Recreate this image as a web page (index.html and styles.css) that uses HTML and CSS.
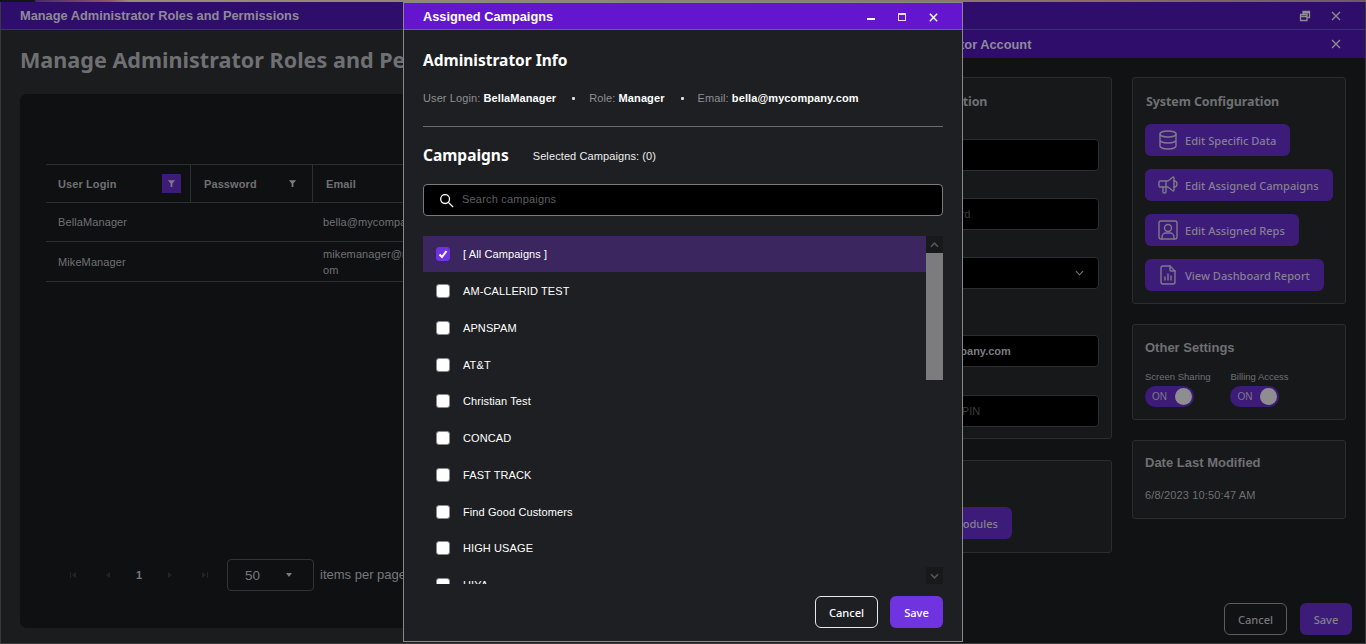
FILE: index.html
```html
<!DOCTYPE html>
<html>
<head>
  <title>Manage Administrator Roles and Permissions</title>
  <link rel="stylesheet" href="styles.css">
</head>
<body>
  <div class="top-strip"></div>

  <!-- main window -->
  <div class="window main-window">
    <div class="titlebar main-title">
      <span>Manage Administrator Roles and Permissions</span>
      <div class="win-actions">
        <svg class="win-icon" viewBox="0 0 12 12"><path d="M1.5 4.500h6.500v6h-6.500zM1.500 6.500h6.500M4 4.500v-3h6.500v6h-2.500M4 2.800h6.500"/></svg>
        <svg class="win-icon" viewBox="0 0 12 12"><path d="M2 2l8 8M10 2l-8 8"/></svg>
      </div>
    </div>
    <div class="main-body">
      <h1 class="page-title">Manage Administrator Roles and Permissions</h1>
      <div class="grid-card">
        <div class="grid">
          <div class="grid-head">
            <div class="head-cell col-login">User Login <span class="filter filter-on"><svg viewBox="0 0 10 10"><path d="M1 1.500h8L6 5v4H4V5z"/></svg></span></div>
            <div class="head-cell col-pass">Password <span class="filter"><svg viewBox="0 0 10 10"><path d="M1 1.500h8L6 5v4H4V5z"/></svg></span></div>
            <div class="head-cell col-mail">Email</div>
          </div>
          <div class="grid-row row-one">
            <div class="col-login">BellaManager</div>
            <div class="col-pass"></div>
            <div class="col-mail">bella@mycompany.com</div>
          </div>
          <div class="grid-row row-two">
            <div class="col-login">MikeManager</div>
            <div class="col-pass"></div>
            <div class="col-mail">mikemanager@mycompany.c<br>om</div>
          </div>
        </div>
        <div class="pager">
          <div class="pager-nums">
            <svg class="pg" viewBox="0 0 8 8"><path d="M1 1h1v6H1zM7 1v6L3 4z"/></svg>
            <svg class="pg" viewBox="0 0 8 8"><path d="M6 1v6L2 4z"/></svg>
            <span class="pg-num">1</span>
            <svg class="pg" viewBox="0 0 8 8"><path d="M2 1v6l4-3z"/></svg>
            <svg class="pg" viewBox="0 0 8 8"><path d="M1 1v6l4-3zM6 1h1v6H6z"/></svg>
          </div>
          <div class="pg-size"><span>50</span><i class="caret"></i></div>
          <span class="pg-label">items per page</span>
        </div>
      </div>
    </div>
  </div>

  <!-- edit account window -->
  <div class="window edit-window">
    <div class="titlebar edit-title">
      <span>Edit Administrator Account</span>
      <svg class="win-icon" viewBox="0 0 12 12"><path d="M2 2l8 8M10 2l-8 8"/></svg>
    </div>
    <div class="edit-body">
      <div class="edit-col left-col">
        <div class="panel info-panel">
          <h3>Account Information</h3>
          <div class="input first-input"></div>
          <div class="input dim">Type a Password</div>
          <div class="input select"><svg viewBox="0 0 10 6"><path d="M1 1l4 4 4-4"/></svg></div>
          <div class="input mail">bella@mycompany.com</div>
          <div class="input dim">Enter Manager PIN</div>
        </div>
        <div class="panel modules-panel">
          <button class="btn-purple">Edit Assigned Modules</button>
        </div>
      </div>
      <div class="edit-col right-col">
        <div class="panel config-panel">
          <h3>System Configuration</h3>
          <button class="btn-purple">
            <svg viewBox="0 0 24 24"><ellipse cx="12" cy="6" rx="8" ry="3"/><path d="M4 6v6c0 1.700 3.600 3 8 3s8-1.300 8-3V6M4 12v6c0 1.700 3.600 3 8 3s8-1.300 8-3v-6"/></svg>
            Edit Specific Data
          </button>
          <button class="btn-purple">
            <svg viewBox="0 0 24 24"><path d="M18 8a3 3 0 0 1 0 6M10 8v11a1 1 0 0 1-1 1H8a1 1 0 0 1-1-1v-5"/><path d="M12 8l4.700-3.800A.8.800 0 0 1 18 4.800v12.400a.8.800 0 0 1-1.300.6L12 14H4a1 1 0 0 1-1-1V9a1 1 0 0 1 1-1z"/></svg>
            Edit Assigned Campaigns
          </button>
          <button class="btn-purple">
            <svg viewBox="0 0 24 24"><rect x="3" y="3" width="18" height="18" rx="2"/><circle cx="12" cy="10" r="3.500"/><path d="M6 21v-2a4 4 0 0 1 4-4h4a4 4 0 0 1 4 4v2"/></svg>
            Edit Assigned Reps
          </button>
          <button class="btn-purple">
            <svg viewBox="0 0 24 24"><path d="M14 3v4a1 1 0 0 0 1 1h4"/><path d="M17 21H7a2 2 0 0 1-2-2V5a2 2 0 0 1 2-2h7l5 5v11a2 2 0 0 1-2 2zM9 17v-3M12 17v-6M15 17v-4"/></svg>
            View Dashboard Report
          </button>
        </div>
        <div class="panel settings-panel">
          <h3 class="arial">Other Settings</h3>
          <div class="toggles">
            <div class="toggle-item">
              <label>Screen Sharing</label>
              <div class="toggle"><span>ON</span><i></i></div>
            </div>
            <div class="toggle-item">
              <label>Billing Access</label>
              <div class="toggle"><span>ON</span><i></i></div>
            </div>
          </div>
        </div>
        <div class="panel date-panel">
          <h3 class="arial">Date Last Modified</h3>
          <p>6/8/2023 10:50:47 AM</p>
        </div>
      </div>
    </div>
    <div class="edit-foot">
      <button class="btn-cancel">Cancel</button>
      <button class="btn-save">Save</button>
    </div>
  </div>

  <!-- assigned campaigns dialog -->
  <div class="window dialog">
    <div class="titlebar dialog-title">
      <span>Assigned Campaigns</span>
      <div class="dialog-actions">
        <i class="act-min"></i>
        <i class="act-max"></i>
        <svg viewBox="0 0 12 12"><path d="M2 2l8 8M10 2l-8 8"/></svg>
      </div>
    </div>
    <div class="dialog-body">
      <h2>Administrator Info</h2>
      <div class="info-line">
        <span>User Login: <b>BellaManager</b></span>
        <em></em>
        <span>Role: <b>Manager</b></span>
        <em></em>
        <span>Email: <b>bella@mycompany.com</b></span>
      </div>
      <hr>
      <div class="camp-head">
        <h2>Campaigns</h2>
        <span>Selected Campaigns: (0)</span>
      </div>
      <div class="search">
        <svg viewBox="0 0 16 16"><circle cx="6.500" cy="6.500" r="4.700"/><path d="M10 10l5 5"/></svg>
        <span>Search campaigns</span>
      </div>
      <div class="camp-list">
        <div class="camp-rows">
          <div class="camp-row selected"><i class="check checked"><svg viewBox="0 0 12 12"><path d="M2.500 6.500l2.500 2.500 4.500-6"/></svg></i>[ All Campaigns ]</div>
          <div class="camp-row"><i class="check"></i>AM-CALLERID TEST</div>
          <div class="camp-row"><i class="check"></i>APNSPAM</div>
          <div class="camp-row"><i class="check"></i>AT&amp;T</div>
          <div class="camp-row"><i class="check"></i>Christian Test</div>
          <div class="camp-row"><i class="check"></i>CONCAD</div>
          <div class="camp-row"><i class="check"></i>FAST TRACK</div>
          <div class="camp-row"><i class="check"></i>Find Good Customers</div>
          <div class="camp-row"><i class="check"></i>HIGH USAGE</div>
          <div class="camp-row"><i class="check"></i>HIYA</div>
        </div>
        <div class="scrollbar">
          <div class="sb-btn"><svg viewBox="0 0 10 6"><path d="M1 5l4-4 4 4"/></svg></div>
          <div class="sb-thumb"></div>
          <div class="sb-space"></div>
          <div class="sb-btn"><svg viewBox="0 0 10 6"><path d="M1 1l4 4 4-4"/></svg></div>
        </div>
      </div>
      <div class="dialog-foot">
        <button class="dlg-cancel">Cancel</button>
        <button class="dlg-save">Save</button>
      </div>
    </div>
  </div>
</body>
</html>
```

FILE: styles.css
```css
* {
  box-sizing: border-box;
}

html, body {
  height: 100%;
}

body {
  margin: 0;
  overflow: hidden;
  background: #1b1c1e;
  font-family: "Liberation Sans", Arial, sans-serif;
  position: relative;
}

h1, h2, h3, p {
  margin: 0;
}

.top-strip {
  height: 2px;
  background: linear-gradient(90deg, #141416 0, #141416 34px, #4a2a70 36px, #8a5a60 110px, #9a8a78 130px, #8d7f70 60%, #8a6d64 80%, #6d5a66 100%);
}

.window {
  position: absolute;
}

.titlebar {
  display: flex;
  align-items: center;
  justify-content: space-between;
}

.win-icon {
  width: 12px;
  height: 12px;
  fill: none;
  stroke: #8f8f93;
  stroke-width: 1.3;
}

/* main window */
.main-window {
  left: 0;
  top: 2px;
  right: 0;
  bottom: 0;
  border: 1px solid #3a3a3d;
  border-top: 0;
  display: flex;
  flex-direction: column;
}

.main-title {
  height: 28px;
  flex: none;
  padding: 0 23px 0 19px;
  background: #2e0e6a;
  border-bottom: 1px solid #3d3a48;
  color: #8f8a9a;
  font-size: 12.8px;
  font-weight: bold;
}

.win-actions {
  display: flex;
  gap: 19px;
}

.main-body {
  flex: 1;
  padding: 17px 19px 15px 19px;
  display: flex;
  flex-direction: column;
  min-height: 0;
}

.page-title {
  font-family: "Noto Sans", sans-serif;
  font-size: 21.6px;
  line-height: 26px;
  font-weight: 700;
  color: #6f7073;
  white-space: nowrap;
  margin-bottom: 21px;
}

.grid-card {
  flex: 1;
  background: #0f1012;
  border-radius: 7px;
  padding: 70px 0 0 26px;
  display: flex;
  flex-direction: column;
}

.grid {
  flex: 1;
  color: #6f7073;
  font-size: 11px;
  letter-spacing: 0.1px;
}

.grid-head, .grid-row {
  display: flex;
  align-items: center;
  border-bottom: 1px solid #2e2f32;
}

.grid-head {
  height: 39px;
  border-top: 1px solid #2e2f32;
  align-items: stretch;
  font-weight: bold;
}

.head-cell {
  display: flex;
  align-items: center;
  justify-content: space-between;
  border-right: 1px solid #2e2f32;
}

.col-login {
  width: 145px;
  padding: 0 9px 0 12px;
  flex: none;
}

.col-pass {
  width: 122px;
  padding: 0 10px 0 13px;
  flex: none;
}

.col-mail {
  width: 420px;
  padding-left: 10px;
  flex: none;
  line-height: 16px;
}

.head-cell.col-mail {
  justify-content: flex-start;
  padding-left: 13px;
  border-right: 0;
}

.row-one {
  height: 39px;
}

.row-two {
  height: 40px;
}

.filter {
  width: 19px;
  height: 19px;
  display: flex;
  align-items: center;
  justify-content: center;
}

.filter svg {
  width: 9px;
  height: 9px;
  fill: #7c7c80;
}

.filter-on {
  background: #3d1b78;
}

.pager {
  height: 34px;
  display: flex;
  align-items: center;
  margin-bottom: 36px;
  color: #77787b;
}

.pager-nums {
  display: flex;
  align-items: center;
  gap: 27px;
  padding-left: 23px;
  width: 181px;
}

.pg {
  width: 8px;
  height: 8px;
  fill: #232426;
  flex: none;
}

.pg-num {
  font-size: 11px;
  font-weight: bold;
  margin: 0 -3px;
}

.pg-size {
  width: 87px;
  height: 32px;
  border: 1px solid #333437;
  border-radius: 4px;
  display: flex;
  align-items: center;
  justify-content: space-between;
  padding: 0 21px 0 17px;
  font-size: 13.5px;
}

.caret {
  width: 0;
  height: 0;
  border-left: 3.5px solid transparent;
  border-right: 3.5px solid transparent;
  border-top: 4px solid #7c7c80;
}

.pg-label {
  margin-left: 6px;
  margin-bottom: 1px;
  font-size: 13px;
  white-space: nowrap;
}

/* edit window */
.edit-window {
  left: 840px;
  top: 30px;
  right: 1px;
  bottom: 1px;
  background: #111214;
  display: flex;
  flex-direction: column;
}

.edit-title {
  height: 28px;
  flex: none;
  padding: 0 23px 0 26px;
  background: #2e0e6a;
  color: #8f8a9a;
  font-size: 12.8px;
  font-weight: bold;
}

.edit-body {
  flex: 1;
  display: flex;
  gap: 20px;
  padding: 19px 20px 0 5px;
}

.edit-col {
  display: flex;
  flex-direction: column;
}

.left-col {
  width: 267px;
  gap: 21px;
}

.right-col {
  width: 214px;
  gap: 20px;
}

.panel {
  background: #17181a;
  border: 1px solid #2c2d30;
  border-radius: 3px;
  padding: 15px 13px;
  flex: none;
}

.panel h3 {
  font-family: "Noto Sans", sans-serif;
  font-size: 12.5px;
  line-height: 18px;
  font-weight: 700;
  letter-spacing: -0.1px;
  color: #6f7073;
  white-space: nowrap;
}

.panel h3.arial {
  font-family: "Liberation Sans", Arial, sans-serif;
  font-size: 13px;
  letter-spacing: 0;
}

.info-panel {
  height: 362px;
}

.input {
  height: 32px;
  width: 240px;
  margin-bottom: 27px;
  background: #000;
  border: 1px solid #2c2d30;
  border-radius: 4px;
  padding-left: 26px;
  display: flex;
  align-items: center;
  font-size: 11px;
  color: #7c7c80;
  white-space: nowrap;
}

.first-input {
  margin-top: 28px;
}

.input.dim {
  color: #3c3c3f;
}

.input.mail {
  font-weight: bold;
  margin-top: 46px;
  margin-bottom: 28px;
}

.input.select {
  justify-content: flex-end;
  padding-right: 14px;
  margin-bottom: 0;
}

.input.select svg {
  width: 9px;
  height: 6px;
  fill: none;
  stroke: #77787b;
  stroke-width: 1.2;
}

.modules-panel {
  height: 93px;
  padding-top: 46px;
}

.btn-purple {
  display: flex;
  align-items: center;
  gap: 5px;
  height: 32px;
  flex: none;
  padding: 0 14px 0 11px;
  border: 0;
  border-radius: 6px;
  background: #3d1b78;
  color: #858090;
  font-family: "Noto Sans", sans-serif;
  font-size: 11.1px;
  font-weight: 500;
  white-space: nowrap;
}

.modules-panel .btn-purple {
  margin-left: auto;
  margin-right: 86px;
}

.btn-purple svg {
  width: 24px;
  height: 24px;
  fill: none;
  stroke: #7e7a88;
  stroke-width: 1.4;
  stroke-linecap: round;
  stroke-linejoin: round;
  flex: none;
}

.config-panel {
  height: 227px;
  display: flex;
  flex-direction: column;
  align-items: flex-start;
  gap: 13px;
}

.config-panel .btn-purple {
  margin-left: -1px;
}

.settings-panel {
  height: 96px;
  padding-top: 14px;
  padding-left: 12px;
}

.toggles {
  display: flex;
  gap: 20px;
  margin-top: 14px;
}

.toggle-item label {
  display: block;
  font-size: 9.5px;
  line-height: 12px;
  color: #6f7073;
  white-space: nowrap;
}

.toggle {
  width: 49px;
  height: 21px;
  margin-top: 3px;
  border-radius: 11px;
  background: #3d1b78;
  display: flex;
  align-items: center;
  justify-content: space-between;
  padding: 0 2px 0 7px;
  font-size: 10px;
  color: #7e7a88;
}

.toggle i {
  width: 17px;
  height: 17px;
  border-radius: 50%;
  background: #8e8e90;
}

.date-panel {
  height: 79px;
  padding-top: 13px;
  padding-left: 12px;
}

.date-panel p {
  margin-top: 17px;
  font-size: 11px;
  letter-spacing: 0.15px;
  color: #6f7073;
}

.edit-foot {
  display: flex;
  justify-content: flex-end;
  gap: 13px;
  padding: 0 13px 8px 0;
}

.btn-cancel, .btn-save {
  height: 32px;
  border-radius: 6px;
  font-family: "Noto Sans", sans-serif;
  font-size: 11.1px;
  font-weight: 500;
  color: #77787b;
}

.btn-cancel {
  width: 63px;
  background: transparent;
  border: 1px solid #5c5c5f;
}

.btn-save {
  width: 52px;
  background: #3d1b78;
  border: 0;
  color: #858090;
}

/* dialog */
.dialog {
  left: 403px;
  top: 2px;
  width: 560px;
  height: 640px;
  background: #1e1f22;
  border: 1px solid #88888b;
  display: flex;
  flex-direction: column;
}

.dialog-title {
  height: 27px;
  flex: none;
  padding: 0 23px 0 19px;
  background: #6316ce;
  color: #fff;
  font-size: 12.8px;
  font-weight: bold;
  border-bottom: 1px solid #6d5aa8;
}

.dialog-actions {
  display: flex;
  align-items: center;
  gap: 22px;
  margin-top: 2px;
}

.dialog-actions svg {
  width: 11px;
  height: 11px;
  fill: none;
  stroke: #fff;
  stroke-width: 1.6;
}

.act-min {
  width: 8px;
  height: 2px;
  margin-top: 3px;
  margin-right: 1px;
  background: #fff;
}

.act-max {
  width: 8px;
  height: 8px;
  border: 1px solid #e8dcf8;
  border-top-width: 2px;
}

.dialog-body {
  flex: 1;
  padding: 20px 19px 0 19px;
  display: flex;
  flex-direction: column;
  min-height: 0;
}

.dialog-body h2 {
  font-family: "Noto Sans", sans-serif;
  font-size: 15.5px;
  line-height: 21px;
  font-weight: 700;
  color: #fff;
}

.info-line {
  display: flex;
  align-items: center;
  margin-top: 20px;
  font-size: 11px;
  line-height: 14px;
  letter-spacing: 0.1px;
  color: #8f8f93;
}

.info-line b {
  color: #fff;
}

.info-line em {
  width: 3px;
  height: 3px;
  border-radius: 1px;
  margin: 0 14px 0 16px;
  background: #ddd;
}

.dialog-body hr {
  width: 100%;
  height: 1px;
  margin: 21px 0 0;
  border: 0;
  background: #6b6b6e;
}

.camp-head {
  display: flex;
  align-items: center;
  gap: 24px;
  margin-top: 18px;
}

.camp-head span {
  font-size: 11px;
  letter-spacing: 0.1px;
  color: #eee;
}

.search {
  height: 32px;
  margin-top: 18px;
  background: #000;
  border: 1px solid #7a7a7d;
  border-radius: 4px;
  display: flex;
  align-items: center;
  gap: 8px;
  padding-left: 15px;
  font-size: 11px;
  color: #5e5e62;
  letter-spacing: 0.2px;
}

.search span {
  margin-bottom: 2px;
}

.search svg {
  width: 15px;
  height: 15px;
  fill: none;
  stroke: #fff;
  stroke-width: 1.4;
}

.camp-list {
  height: 348px;
  margin-top: 20px;
  display: flex;
  overflow: hidden;
}

.camp-rows {
  flex: 1;
  overflow: hidden;
}

.camp-row {
  height: 36.75px;
  display: flex;
  align-items: center;
  gap: 13px;
  padding-left: 13px;
  font-size: 11px;
  letter-spacing: 0.1px;
  color: #fff;
}

.camp-row.selected {
  height: 36px;
  margin-bottom: 0.75px;
  background: #3b2660;
}

.check {
  width: 14px;
  height: 14px;
  border-radius: 3px;
  background: #fff;
  border: 1px solid #8a8a8d;
  flex: none;
  display: flex;
  align-items: center;
  justify-content: center;
}

.check.checked {
  background: #7033e0;
  border-color: #7033e0;
}

.check svg {
  width: 12px;
  height: 12px;
  fill: none;
  stroke: #fff;
  stroke-width: 2;
}

.scrollbar {
  width: 17px;
  display: flex;
  flex-direction: column;
  background: #1e1f22;
}

.sb-btn {
  height: 17px;
  background: #18191b;
  display: flex;
  align-items: center;
  justify-content: center;
  flex: none;
}

.sb-btn svg {
  width: 9px;
  height: 6px;
  fill: none;
  stroke: #55565a;
  stroke-width: 1.8;
}

.sb-thumb {
  height: 127px;
  background: #7c7c7e;
  flex: none;
}

.sb-space {
  flex: 1;
}

.dialog-foot {
  display: flex;
  justify-content: flex-end;
  gap: 12px;
  margin-top: 12px;
}

.dlg-cancel, .dlg-save {
  height: 32px;
  border-radius: 6px;
  font-family: "Noto Sans", sans-serif;
  font-size: 11.1px;
  font-weight: 500;
  color: #fff;
}

.dlg-cancel {
  width: 63px;
  background: transparent;
  border: 1px solid #e8e8e8;
}

.dlg-save {
  width: 53px;
  background: #7033e0;
  border: 0;
}
```
